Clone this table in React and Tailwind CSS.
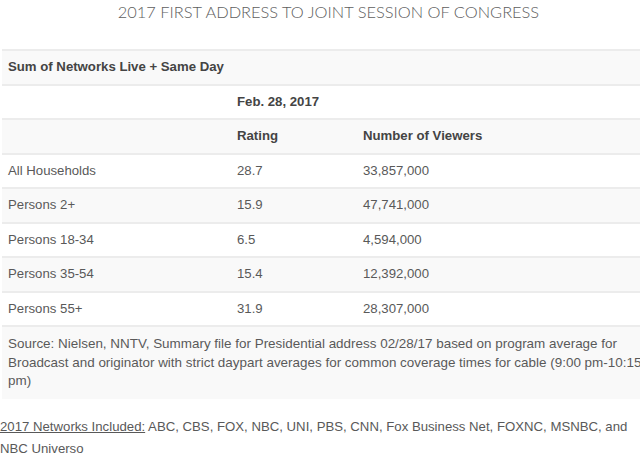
const rows = [
  { label: 'All Households', rating: '28.7', viewers: '33,857,000' },
  { label: 'Persons 2+', rating: '15.9', viewers: '47,741,000' },
  { label: 'Persons 18-34', rating: '6.5', viewers: '4,594,000' },
  { label: 'Persons 35-54', rating: '15.4', viewers: '12,392,000' },
  { label: 'Persons 55+', rating: '31.9', viewers: '28,307,000' },
];

function Row({ shaded, children, bold }) {
  return (
    <div
      className={`flex items-center h-[34.5px] border-t-2 border-[#ececec] text-[13.2px] ${
        shaded ? 'bg-[#f9f9f9]' : 'bg-white'
      } ${bold ? 'font-bold text-[#444]' : 'text-[#595959]'}`}
    >
      {children}
    </div>
  );
}

export default function App() {
  return (
    <div className="w-[640px] h-[456px] overflow-hidden bg-white" style={{ fontFamily: '"Liberation Sans", Arial, sans-serif' }}>
      <div className="w-[657px]">
        <h1
          className="h-[49px] text-center text-[16.4px] leading-[24px] font-light text-[#5e5e5e]"
          style={{ fontFamily: 'Lato, sans-serif' }}
        >
          2017 FIRST ADDRESS TO JOINT SESSION OF CONGRESS
        </h1>

        <div className="ml-[2px]">
          <Row shaded bold>
            <span className="pl-[6px]">Sum of Networks Live + Same Day</span>
          </Row>
          <Row bold>
            <span className="w-[235px] shrink-0" />
            <span>Feb. 28, 2017</span>
          </Row>
          <Row shaded bold>
            <span className="w-[235px] shrink-0" />
            <span className="w-[126px] shrink-0">Rating</span>
            <span>Number of Viewers</span>
          </Row>
          {rows.map((r, i) => (
            <Row key={r.label} shaded={i % 2 === 1}>
              <span className="w-[235px] shrink-0 pl-[6px]">{r.label}</span>
              <span className="w-[126px] shrink-0">{r.rating}</span>
              <span>{r.viewers}</span>
            </Row>
          ))}
          <div className="border-t-2 border-[#ececec] bg-[#f9f9f9] px-[6px] pt-[8px] pb-[8px] text-[13.45px] leading-[18.5px] text-[#595959]">
            Source: Nielsen, NNTV, Summary file for Presidential address 02/28/17 based on program average for Broadcast and
            originator with strict daypart averages for common coverage times for cable (9:00 pm-10:15 pm)
          </div>
        </div>

        <p className="w-[640px] mt-[17px] text-[13.2px] leading-[22px] text-[#595959]">
          <span className="underline">2017 Networks Included:</span> ABC, CBS, FOX, NBC, UNI, PBS, CNN, Fox Business Net,
          FOXNC, MSNBC, and NBC Universo
        </p>
      </div>
    </div>
  );
}
